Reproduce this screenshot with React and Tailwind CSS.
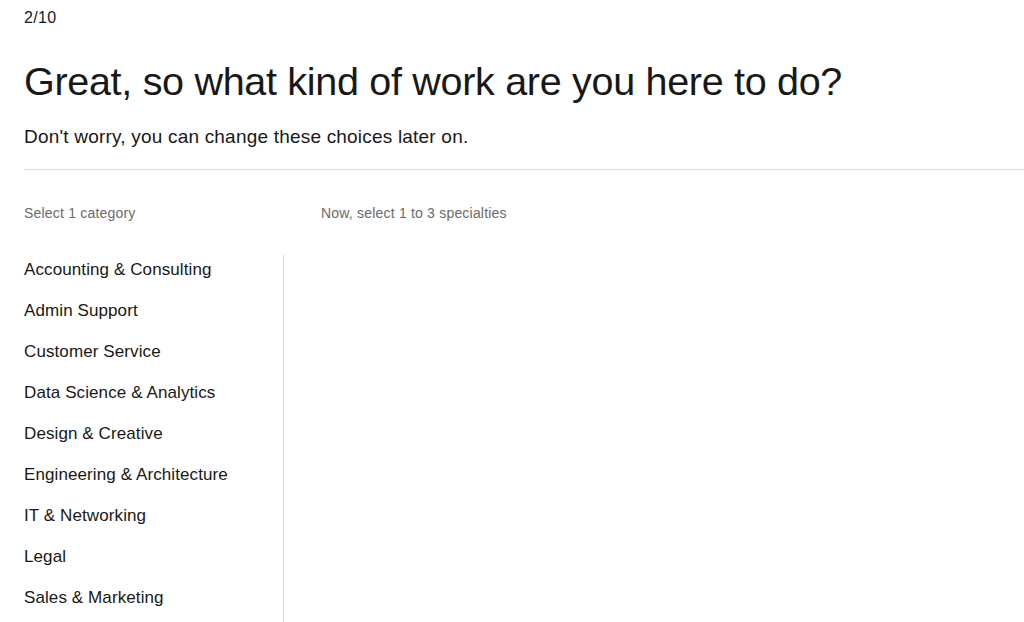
const categories = [
  'Accounting & Consulting',
  'Admin Support',
  'Customer Service',
  'Data Science & Analytics',
  'Design & Creative',
  'Engineering & Architecture',
  'IT & Networking',
  'Legal',
  'Sales & Marketing',
];

export default function App() {
  return (
    <div className="h-screen bg-white text-[#181818] font-['Liberation_Sans',Arial,sans-serif] pl-6 overflow-hidden flex flex-col">
      {/* Step counter */}
      <div className="pt-[9px] text-[16px] leading-[18px] tracking-[0.3px]">2/10</div>

      {/* Heading */}
      <h1 className="mt-[30px] text-[39.5px] leading-[48px] tracking-[-0.3px]">
        Great, so what kind of work are you here to do?
      </h1>
      <p className="mt-[20px] text-[19px] leading-[24px] tracking-[0.2px]">
        Don't worry, you can change these choices later on.
      </p>

      <div className="mt-[20px] border-t border-[#d9d9d9]"></div>

      {/* Column labels */}
      <div className="mt-[34px] flex text-[14px] leading-[18px] tracking-[0.2px] text-[#6a6a6a]">
        <div className="w-[297px]">Select 1 category</div>
        <div>Now, select 1 to 3 specialties</div>
      </div>

      {/* Columns */}
      <div className="mt-[33px] flex flex-1 min-h-0">
        <ul className="w-[260px] border-r border-[#d9d9d9] pt-[5px]">
          {categories.map((c) => (
            <li key={c} className="text-[17px] leading-[20px] tracking-[0.1px] mb-[21px]">
              {c}
            </li>
          ))}
        </ul>
        <div className="flex-1"></div>
      </div>
    </div>
  );
}
